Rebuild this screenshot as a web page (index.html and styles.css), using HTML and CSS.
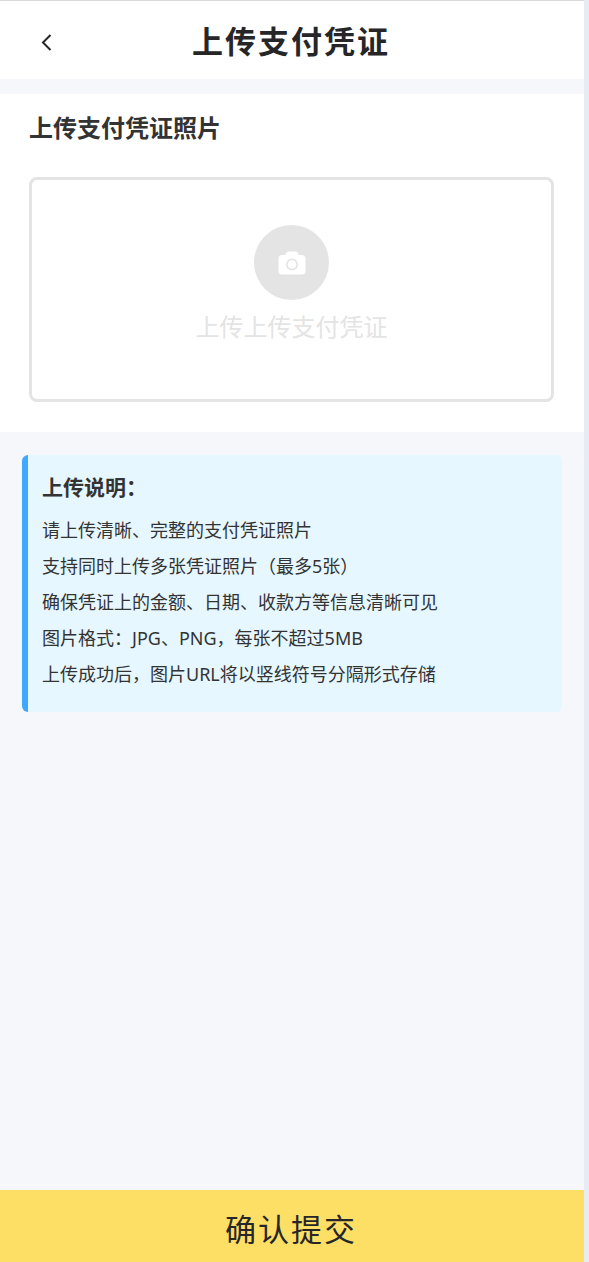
FILE: index.html
```html
<!DOCTYPE html>
<html lang="zh-CN">
<head>
<meta charset="utf-8">
<meta name="viewport" content="width=device-width, initial-scale=1">
<title>上传支付凭证</title>
<link rel="stylesheet" href="styles.css">
</head>
<body>
<div class="page">
  <header class="navbar">
    <button class="back" type="button" aria-label="返回">
      <svg width="12" height="18" viewBox="0 0 12 18" fill="none" stroke="currentColor" stroke-width="2"><path d="M10.500 2 3 9.500l7.500 7.500"/></svg>
    </button>
    <h1 class="navbar-title">上传支付凭证</h1>
  </header>
  <main class="content">
    <section class="card">
      <h2 class="card-title">上传支付凭证照片</h2>
      <button class="uploader" type="button">
        <span class="uploader-icon">
          <svg width="28" height="24" viewBox="0 0 28 24"><path fill="#fff" d="M4 4h3l1.500-2.500Q9.300.500 10.500.500h7q1.200 0 2 1L21 4h3q3.500 0 3.500 3.500v12.500q0 3.500-3.500 3.500H4Q.500 23.500.500 20V7.500Q.500 4 4 4Z"/><circle cx="14" cy="13.500" r="5.200" fill="none" stroke="#e4e4e4" stroke-width="1.600"/></svg>
        </span>
        <span class="uploader-text">上传上传支付凭证</span>
      </button>
    </section>
    <section class="notice">
      <h3 class="notice-title">上传说明：</h3>
      <ul class="notice-list">
        <li>请上传清晰、完整的支付凭证照片</li>
        <li>支持同时上传多张凭证照片（最多5张）</li>
        <li>确保凭证上的金额、日期、收款方等信息清晰可见</li>
        <li>图片格式：JPG、PNG，每张不超过5MB</li>
        <li>上传成功后，图片URL将以竖线符号分隔形式存储</li>
      </ul>
    </section>
  </main>
  <button class="submit" type="button">确认提交</button>
</div>
</body>
</html>
```
FILE: styles.css
```css
* {
  box-sizing: border-box;
}

body {
  margin: 0;
  padding-right: 5px;
  background: #e6ebf4;
  color: #333;
  font-family: "Noto Sans", "Noto Sans CJK SC", sans-serif;
}

button {
  margin: 0;
  padding: 0;
  border: 0;
  background: none;
  color: inherit;
  font: inherit;
  cursor: pointer;
}

h1,
h2,
h3,
ul {
  margin: 0;
  padding: 0;
}

.page {
  display: flex;
  flex-direction: column;
  min-height: 100vh;
  background: #f5f7fb;
}

.navbar {
  display: grid;
  grid-template-columns: 64px 1fr 66px;
  align-items: center;
  padding: 17px 0 15px;
  border-top: 1px solid #d9d9d9;
  background: #fff;
  color: #262628;
}

.back {
  display: flex;
  justify-content: flex-end;
  padding: 13px 12px 12px;
}

.navbar-title {
  font-size: 31px;
  line-height: 46px;
  letter-spacing: 2px;
  text-align: center;
}

.content {
  flex: 1;
  padding-top: 15px;
}

.card {
  padding: 16px 30px 30px 29px;
  background: #fff;
}

.card-title {
  font-size: 24px;
  line-height: 36px;
}

.uploader {
  display: flex;
  flex-direction: column;
  align-items: center;
  gap: 10px;
  width: 100%;
  margin-top: 31px;
  padding: 45px 0 56px;
  border: 3px solid #e4e4e4;
  border-radius: 8px;
  color: #e4e4e4;
}

.uploader-icon {
  display: flex;
  align-items: center;
  justify-content: center;
  width: 75px;
  height: 75px;
  border-radius: 50%;
  background: #e4e4e4;
}

.uploader-text {
  font-size: 24px;
  line-height: 33px;
}

.notice {
  margin: 23px 22px;
  padding: 14px 14px 20px;
  border-left: 6px solid #40a9ff;
  border-radius: 6px;
  background: #e6f7ff;
}

.notice-title {
  font-size: 21px;
  line-height: 36px;
}

.notice-list {
  margin-top: 7px;
  list-style: none;
  font-size: 18px;
  line-height: 36px;
}

.submit {
  position: sticky;
  bottom: 0;
  padding: 6px 2px 0 0;
  background: #fddf66;
  color: #262628;
  font-size: 31px;
  line-height: 66px;
  letter-spacing: 2px;
}
```
